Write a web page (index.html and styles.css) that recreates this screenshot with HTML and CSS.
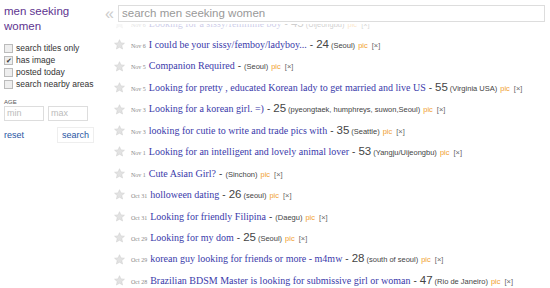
FILE: index.html
```html
<!DOCTYPE html>
<html>
<head>
    <meta charset="utf-8">
    <title>men seeking women</title>
    <link rel="stylesheet" href="styles.css">
</head>
<body>
    <div class="page">
        <div class="side">
            <div class="title">men seeking women</div>
            <label class="opt"><span class="box"></span>search titles only</label>
            <label class="opt"><span class="box on">&#10004;</span>has image</label>
            <label class="opt"><span class="box"></span>posted today</label>
            <label class="opt"><span class="box"></span>search nearby areas</label>
            <div class="age">AGE</div>
            <div class="ages">
                <span class="inp">min</span>
                <span class="inp">max</span>
            </div>
            <div class="btns">
                <span class="reset">reset</span>
                <span class="go">search</span>
            </div>
        </div>
        <div class="main">
            <div class="top">
                <span class="arr">&laquo;</span>
                <div class="search">search men seeking women</div>
            </div>
            <div class="list">
                <div class="rows" id="rows"></div>
            </div>
        </div>
    </div>
    <script>
        var star = '<svg class="star" width="11" height="11" viewBox="0 0 24 24"><path d="M12 1.5l3.1 7.1 7.7.6-5.9 5.1 1.8 7.5L12 17.8l-6.7 4 1.8-7.5-5.9-5.1 7.7-.6z" fill="#e2e2e2" stroke="#cfcfcf" stroke-width="1.2"/></svg>';
        var posts = [
            ["Nov 6", "Looking for a sissy/feminine boy", "45", "(Uijeongbu)", 0, 1],
            ["Nov 6", "I could be your sissy/femboy/ladyboy...", "24", "(Seoul)", 1],
            ["Nov 5", "Companion Required", "", "(Seoul)", 1],
            ["Nov 5", "Looking for pretty , educated Korean lady to get married and live US", "55", "(Virginia USA)", 1],
            ["Nov 3", "Looking for a korean girl. =)", "25", "(pyeongtaek, humphreys, suwon,Seoul)", 1],
            ["Nov 3", "looking for cutie to write and trade pics with", "35", "(Seattle)", 1],
            ["Nov 1", "Looking for an intelligent and lovely animal lover", "53", "(Yangju/Uijeongbu)", 1],
            ["Nov 1", "Cute Asian Girl?", "", "(Sinchon)", 1],
            ["Oct 31", "holloween dating", "26", "(seoul)", 1],
            ["Oct 31", "Looking for friendly Filipina", "", "(Daegu)", 1],
            ["Oct 29", "Looking for my dom", "25", "(Seoul)", 1],
            ["Oct 29", "korean guy looking for friends or more - m4mw", "28", "(south of seoul)", 1],
            ["Oct 28", "Brazilian BDSM Master is looking for submissive girl or woman", "47", "(Rio de Janeiro)", 1]
        ];
        var html = '';
        for (var i = 0; i < posts.length; i++) {
            var p = posts[i];
            html += '<div class="row' + (p[5] ? ' faded' : '') + '">' + star +
                '<span class="date">' + p[0] + '</span>' +
                '<span class="link">' + p[1] + '</span>' +
                '<span class="dash">-</span>' +
                (p[2] ? '<span class="age-n">' + p[2] + '</span>' : '') +
                '<span class="loc">' + p[3] + '</span>' +
                '<span class="pic">pic</span>' +
                '<span class="x">[&times;]</span></div>';
        }
        document.getElementById('rows').innerHTML = html;
    </script>
</body>
</html>
```

FILE: styles.css
```css
html,
body {
    margin: 0;
    padding: 0;
    background: #fff;
    height: 100%;
    overflow: hidden;
}

.page {
    display: flex;
    font-family: "Liberation Sans", Arial, sans-serif;
}

.side {
    width: 96px;
    flex: none;
    padding: 3px 0 0 4px;
}

.title {
    color: #5e3490;
    font-size: 11.5px;
    line-height: 15px;
    margin: 1px 0 8px;
}

.opt {
    display: flex;
    align-items: center;
    height: 12px;
    font-size: 8.5px;
    color: #333;
}

.box {
    width: 7px;
    height: 7px;
    border: 1px solid #bbb;
    background: #eee;
    margin-right: 3px;
    font-size: 7px;
    line-height: 7px;
    color: #333;
    text-align: center;
}

.age {
    font-size: 6px;
    color: #555;
    margin-top: 9px;
}

.ages {
    display: flex;
    gap: 4px;
    margin-top: 1px;
}

.inp {
    width: 36px;
    height: 13px;
    border: 1px solid #ddd;
    font-size: 9px;
    line-height: 13px;
    color: #bbb;
    padding-left: 2px;
}

.btns {
    display: flex;
    justify-content: space-between;
    align-items: center;
    width: 90px;
    margin-top: 6px;
}

.reset {
    color: #2855a3;
    font-size: 9px;
}

.go {
    color: #2855a3;
    font-size: 9px;
    border: 1px solid #eee;
    padding: 2px 4px;
}

.main {
    flex: 1;
    min-width: 0;
}

.top {
    display: flex;
    align-items: center;
    height: 17px;
    padding: 5px 0 2px;
    gap: 4px;
    position: relative;
    z-index: 1;
    background: #fff;
}

.arr {
    color: #ccc;
    font-size: 16px;
    width: 9px;
    margin-left: 5px;
}

.search {
    flex: none;
    width: 422px;
    height: 15px;
    border: 1px solid #ddd;
    font-size: 11.5px;
    line-height: 15px;
    color: #999;
    padding-left: 3px;
}

.list {
    overflow: hidden;
}

.rows {
    margin-top: -11.4px;
}

.row {
    display: flex;
    align-items: baseline;
    height: 21.45px;
    line-height: 21.45px;
    white-space: nowrap;
    color: #444;
}

.row.faded {
    opacity: .25;
}

.star {
    align-self: center;
    margin: 0 6px 0 14px;
}

.date {
    font-family: "Liberation Serif", serif;
    font-size: 6px;
    color: #888;
    margin-right: 3px;
}

.link {
    font-family: "Liberation Serif", serif;
    font-size: 10px;
    color: #3a3aaa;
}

.dash {
    font-size: 10px;
    margin: 0 3px;
}

.age-n {
    font-size: 11.5px;
    margin-right: 2px;
}

.loc {
    font-size: 7.5px;
    margin-right: 3px;
}

.pic {
    font-size: 7.5px;
    color: #f0a030;
    margin-right: 4px;
}

.x {
    font-size: 7.5px;
    color: #666;
}
```
